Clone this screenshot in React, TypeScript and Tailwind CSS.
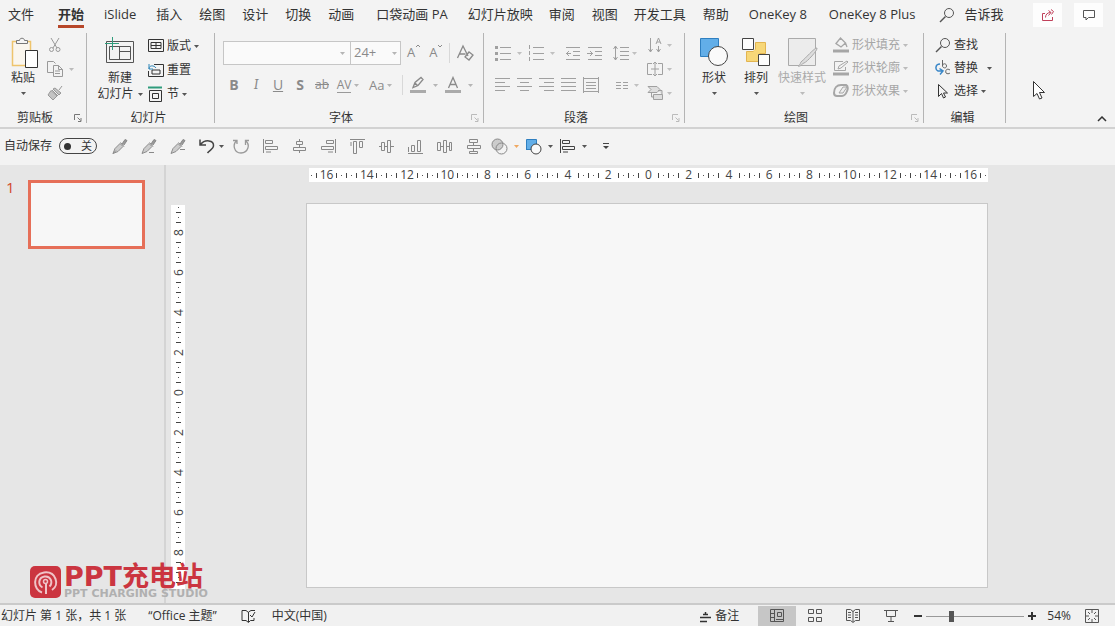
import type { ReactNode } from "react";

interface TabItem {
  label: string;
  gap: string;
  active?: boolean;
}

const tabs: TabItem[] = [
  { label: "文件", gap: "ml-2" },
  { label: "开始", gap: "ml-6", active: true },
  { label: "iSlide", gap: "ml-5" },
  { label: "插入", gap: "ml-5" },
  { label: "绘图", gap: "ml-[17px]" },
  { label: "设计", gap: "ml-[17px]" },
  { label: "切换", gap: "ml-[17px]" },
  { label: "动画", gap: "ml-[17px]" },
  { label: "口袋动画 PA", gap: "ml-[22px]" },
  { label: "幻灯片放映", gap: "ml-5" },
  { label: "审阅", gap: "ml-4" },
  { label: "视图", gap: "ml-[17px]" },
  { label: "开发工具", gap: "ml-4" },
  { label: "帮助", gap: "ml-[17px]" },
  { label: "OneKey 8", gap: "ml-5" },
  { label: "OneKey 8 Plus", gap: "ml-[22px]" },
];

interface IconProps {
  w?: number;
  h?: number;
  className?: string;
  children: ReactNode;
}

function Icon({ w = 16, h = 16, className = "", children }: IconProps) {
  return (
    <svg
      width={w}
      height={h}
      viewBox={`0 0 ${w} ${h}`}
      fill="none"
      stroke="currentColor"
      className={`shrink-0 ${className}`}
      aria-hidden="true"
    >
      {children}
    </svg>
  );
}

function Arrow({ className = "text-[#555]" }: { className?: string }) {
  return (
    <Icon w={5} h={3} className={className}>
      <path d="M0 0h5L2.500 3z" fill="currentColor" stroke="none" />
    </Icon>
  );
}

function Lines({ rows }: { rows: [number, number][] }) {
  return (
    <Icon>
      {rows.map(([x1, x2], i) => (
        <path key={i} d={`M${x1} ${1.5 + i * 4}H${x2}`} />
      ))}
    </Icon>
  );
}

function Magnifier() {
  return (
    <Icon className="text-[#555]">
      <circle cx="10" cy="6" r="4.500" />
      <path d="M6.500 9.500L1 15" strokeWidth="1.500" />
    </Icon>
  );
}

function ShapesIcon() {
  return (
    <Icon w={30} h={30}>
      <path d="M1.500 1.500h18v18h-18z" fill="#62aee8" stroke="#2f7fc0" />
      <circle cx="19" cy="19" r="9.500" fill="#fafafa" stroke="#444" />
    </Icon>
  );
}

interface GroupProps {
  title: string;
  width: string;
  launcher?: string;
  children: ReactNode;
}

function Group({ title, width, launcher, children }: GroupProps) {
  return (
    <section className={`${width} flex shrink-0`}>
      <div className="flex flex-1 flex-col">
        <div className="flex h-20">{children}</div>
        <div className="flex h-[18px] items-center">
          <h2 className="flex-1 pr-1 text-center">{title}</h2>
          {launcher && (
            <button aria-label={`${title}设置`} className={`mr-1 ${launcher}`}>
              <Icon w={8} h={8}>
                <path d="M.5 6V.5H6M3.500 3.500l3 3M7 4v3.500H4" />
              </Icon>
            </button>
          )}
        </div>
      </div>
      <div className="my-1 w-px bg-[#b4b4b4]" />
    </section>
  );
}

const alignIcons: { name: string; d: string }[] = [
  { name: "左对齐", d: "M1.500 1v14M3.500 2.500h7v3h-7zM3.500 8.500h12v3h-12zM4 14h5" },
  { name: "水平居中", d: "M5.500 3.500h6v3h-6zM2.500 9.500h12v3h-12zM8.500 1v2M8.500 7v2M8.500 13v2" },
  { name: "右对齐", d: "M15.500 1v14M6.500 2.500h7v3h-7zM1.500 8.500h12v3h-12zM8 14h5" },
  { name: "顶端对齐", d: "M1 1.500h15M4.500 3.500h3v12h-3zM10.500 3.500h3v6h-3zM2 4v4" },
  { name: "垂直居中", d: "M3.500 4.500h3v8h-3zM9.500 2.500h3v12h-3zM1 8.500h2M7 8.500h2M13 8.500h3" },
  { name: "底端对齐", d: "M1 15.500h15M4.500 7.500h3v6h-3zM10.500 2.500h3v11h-3zM1.500 9v5" },
  { name: "横向分布", d: "M1.500 4.500h3v8h-3zM7.500 2.500h3v12h-3zM13.500 4.500h2v8h-2zM5 8.500h2M11 8.500h2" },
  { name: "纵向分布", d: "M4.500 1.500h8v3h-8zM2.500 7.500h13v3h-13zM4.500 13.500h8v2h-8zM8.500 5v2M8.500 11v2" },
];

const hLabels = [16, 14, 12, 10, 8, 6, 4, 2, 0, 2, 4, 6, 8, 10, 12, 14, 16];
const vLabels = [8, 6, 4, 2, 0, 2, 4, 6, 8];

function HTick({ tall }: { tall?: boolean }) {
  return (
    <span className="flex w-[5px] items-center justify-center">
      <i className={tall ? "h-[5px] w-px bg-[#444]" : "h-px w-px bg-[#555]"} />
    </span>
  );
}

function VTick({ tall }: { tall?: boolean }) {
  return (
    <span className="flex h-[5px] items-center justify-center">
      <i className={tall ? "h-px w-[5px] bg-[#444]" : "h-px w-px bg-[#555]"} />
    </span>
  );
}

function HRuler() {
  return (
    <div className="ml-[3px] flex h-[14px] bg-white text-[12px] leading-[14px] text-[#444]">
      {hLabels.map((n, i) => (
        <div key={i} className="flex grow">
          {i > 0 && <HTick tall />}
          <HTick />
          <HTick tall />
          <span className="flex w-[15px] grow justify-center">{n}</span>
          <HTick tall />
          <HTick />
        </div>
      ))}
    </div>
  );
}

function VRuler() {
  return (
    <div className="mt-10 mb-[14px] ml-[5px] flex w-[14px] flex-col bg-white text-[12px] text-[#444]">
      <VTick />
      {vLabels.map((n, i) => (
        <div key={i} className="flex flex-col">
          <VTick tall />
          <VTick />
          <VTick tall />
          <span className="flex h-[15px] -rotate-90 items-center justify-center leading-[14px]">{n}</span>
          <VTick tall />
          <VTick />
        </div>
      ))}
      <VTick tall />
      <VTick />
      <VTick tall />
    </div>
  );
}

function TabBar() {
  return (
    <nav className="flex h-[29px] items-center text-[13px]">
      {tabs.map((tab) => (
        <button
          key={tab.label}
          className={`${tab.gap} h-[27px] border-b-3 pt-[3px] whitespace-nowrap ${
            tab.active ? "border-[#b7472a] font-bold" : "border-transparent"
          }`}
        >
          {tab.label}
        </button>
      ))}
      <button className="ml-6 flex items-center gap-[9px] whitespace-nowrap">
        <Magnifier />
        告诉我
      </button>
      <div className="mr-3 ml-auto flex gap-3">
        <button aria-label="共享" className="flex h-6 w-[29px] items-center justify-center bg-[#fdfdfd] text-[#c0405a]">
          <Icon w={14} h={14}>
            <path d="M4 5.500H1.500v7h10V9M4.500 9.500c0-3 2-5 5-5M7.500 2.500l2.500 2-2.500 3M10 1.500l2.500 2-2 3" />
          </Icon>
        </button>
        <button aria-label="批注" className="flex h-6 w-[29px] items-center justify-center bg-[#fdfdfd] text-[#555]">
          <Icon w={14} h={14}>
            <path d="M1.500 2.500h11v7h-6L4 12V9.500H1.500z" />
          </Icon>
        </button>
      </div>
    </nav>
  );
}

function ClipboardGroup() {
  return (
    <Group title="剪贴板" width="w-[87px]" launcher="text-[#777]">
      <button className="ml-2 flex w-[30px] flex-col items-center pt-2">
        <Icon w={30} h={32}>
          <path d="M4.500 4.500h18v24h-18z" fill="#faf6ee" stroke="#eec46c" strokeWidth="1.500" />
          <path d="M8.500 6.500v-3h3c0-3 5-3 5 0h3v3z" fill="#f5f5f5" stroke="#777" />
          <path d="M17.500 13.500h12v17h-12z" fill="#fff" stroke="#333" />
        </Icon>
        <span className="leading-[18px]">粘贴</span>
        <span className="flex h-3 items-center"><Arrow /></span>
      </button>
      <div className="ml-[9px] flex flex-col gap-2 pt-2 text-[#999]">
        <button aria-label="剪切">
          <Icon>
            <path d="M4 1l6 10M12 1L6 11" />
            <circle cx="4.500" cy="12.500" r="2" />
            <circle cx="11" cy="12.500" r="2" />
          </Icon>
        </button>
        <button aria-label="复制" className="flex items-center gap-[6px]">
          <Icon>
            <path d="M6 11.500H.500V.500h6l2 2M6.500 4.500h5l4 4v7h-9zM11.500 4.500v4h4M8 10h5M8 12.500h5" />
          </Icon>
          <Arrow className="text-[#bbb]" />
        </button>
        <button aria-label="格式刷">
          <Icon>
            <path d="M15 1l-3 4M5 5l6 6M6 4l6 6 2-2-6-5zM4 5.500L1 10l5 5 4-4z" fill="#c4c4c4" />
          </Icon>
        </button>
      </div>
    </Group>
  );
}

function SlidesGroup() {
  return (
    <Group title="幻灯片" width="w-[128px]">
      <button className="ml-[9px] flex w-[48px] flex-col items-center pt-[7px]">
        <Icon w={32} h={30}>
          <path d="M2.500 5.500h27v21h-27zM5.500 10.500h21v13h-21zM15.500 10.500v13M15.500 15.500h11" stroke="#555" />
          <path d="M8.500 1v13M1 7.500h14" stroke="#2f9c7c" />
        </Icon>
        <span className="mt-[3px] leading-[18px]">新建</span>
        <span className="flex items-center gap-1 leading-[14px] whitespace-nowrap">
          幻灯片 <Arrow />
        </span>
      </button>
      <div className="ml-1 flex flex-col gap-[6px] pt-2 leading-[18px]">
        <button className="flex items-center gap-[3px]">
          <Icon>
            <path d="M.5 1.500h15v12H.500zM3 4.500h10v6H3zM8 4.500v6M3 7.500h10" />
          </Icon>
          版式 <Arrow />
        </button>
        <button className="flex items-center gap-[3px]">
          <Icon>
            <path d="M6 2.500h9.500v12H.500V9M4 8h8v4H4z" />
            <path d="M1 7c0-4 5-4 7-1M1 2v5h4" stroke="#2f86b8" />
          </Icon>
          重置
        </button>
        <button className="flex items-center gap-[3px]">
          <Icon>
            <path d="M1.500 4.500h12v11h-12zM4.500 7.500h6v5h-6z" />
            <path d="M0 1.500h14" stroke="#2f9c7c" strokeWidth="2" />
          </Icon>
          节 <Arrow />
        </button>
      </div>
    </Group>
  );
}

function FontGroup() {
  return (
    <Group title="字体" width="w-[269px]" launcher="text-[#bbb]">
      <div className="ml-2 flex flex-col pt-3 text-[#8a8a8a]">
        <div className="flex h-6 items-center">
          <div className="relative flex h-6 w-32 items-center">
            <select aria-label="字体名称" className="h-full w-full appearance-none border border-[#c6c6c6] bg-[#fafafa] px-1">
              <option></option>
            </select>
            <Arrow className="absolute right-[6px] text-[#b5b5b5]" />
          </div>
          <div className="relative flex h-6 w-[50px] items-center">
            <select aria-label="字号" className="h-full w-full appearance-none border border-l-0 border-[#c6c6c6] bg-[#fafafa] px-[3px] text-[13px]">
              <option>24+</option>
            </select>
            <Arrow className="absolute right-1 text-[#b5b5b5]" />
          </div>
          <button aria-label="增大字号" className="ml-[6px] flex text-[13px]">
            A<Icon w={6} h={6}><path d="M1 4l2-2 2 2" /></Icon>
          </button>
          <button aria-label="减小字号" className="ml-2 flex text-[13px]">
            A<Icon w={6} h={6}><path d="M1 2l2 2 2-2" /></Icon>
          </button>
          <i className="ml-[6px] h-5 w-px bg-[#d8d8d8]" />
          <button aria-label="清除格式" className="ml-[6px]">
            <Icon w={18} h={18}>
              <path d="M1.500 14L7 2l5 10M3.500 10h6M9 13l4-5 4 3-4 5z" strokeWidth="1.300" />
            </Icon>
          </button>
        </div>
        <div className="mt-2 flex h-6 items-center text-[14px] leading-[20px]">
          <button className="w-[22px] font-bold">B</button>
          <button className="w-[22px] font-serif italic">I</button>
          <button className="w-[22px] underline">U</button>
          <button className="w-[22px] font-bold">S</button>
          <button className="w-[22px] text-[12px] line-through">ab</button>
          <button className="flex w-[30px] items-center justify-center gap-[3px] text-[12px]">
            <span className="border-b border-[#999] leading-[14px]">AV</span>
            <Arrow className="text-[#b5b5b5]" />
          </button>
          <button className="ml-[6px] flex items-center gap-[3px] text-[13px]">
            Aa <Arrow className="text-[#b5b5b5]" />
          </button>
          <i className="mr-[6px] ml-[10px] h-5 w-px bg-[#d8d8d8]" />
          <button aria-label="文本突出显示颜色" className="flex items-center gap-[6px]">
            <Icon w={18} h={18}>
              <path d="M4 11.500l2-5 6-5 2 2-5 6zM6 7l3 3" strokeWidth="1.300" />
              <path d="M1 15.500h16" strokeWidth="3" stroke="#aaa" />
            </Icon>
            <Arrow className="text-[#b5b5b5]" />
          </button>
          <button aria-label="字体颜色" className="ml-[6px] flex items-center gap-[6px]">
            <Icon w={18} h={18}>
              <path d="M4.500 12L9 1.500 13.500 12M6 8.500h6" strokeWidth="1.300" />
              <path d="M1 15.500h16" strokeWidth="3" stroke="#aaa" />
            </Icon>
            <Arrow className="text-[#b5b5b5]" />
          </button>
        </div>
      </div>
    </Group>
  );
}

function ParagraphGroup() {
  return (
    <Group title="段落" width="w-[201px]" launcher="text-[#bbb]">
      <div className="ml-[11px] flex w-[142px] flex-col pt-4 text-[#a0a0a0]">
        <div className="flex h-4 items-center">
          <button aria-label="项目符号" className="flex items-center gap-[6px]">
            <Icon>
              <path d="M5 2.500h11M5 8.500h11M5 14.500h11" />
              <path d="M0 2.500h3M0 8.500h3M0 14.500h3" strokeWidth="3" />
            </Icon>
            <Arrow className="text-[#c0c0c0]" />
          </button>
          <button aria-label="编号" className="ml-[6px] flex items-center gap-[6px]">
            <Icon>
              <path d="M5 2.500h11M5 8.500h11M5 14.500h11M1.500 0v4M1.500 6v4M1.500 12v4" />
            </Icon>
            <Arrow className="text-[#c0c0c0]" />
          </button>
          <button aria-label="减少缩进" className="ml-[10px]">
            <Icon>
              <path d="M1 2.500h14M8 6.500h7M8 10.500h7M1 14.500h14M6 8.500H1M4 6L1.500 8.500 4 11" />
            </Icon>
          </button>
          <button aria-label="增加缩进" className="ml-[6px]">
            <Icon>
              <path d="M1 2.500h14M8 6.500h7M8 10.500h7M1 14.500h14M0 8.500h6M3 6l2.500 2.500L3 11" />
            </Icon>
          </button>
          <button aria-label="行距" className="ml-[10px] flex items-center gap-[3px]">
            <Icon>
              <path d="M7 2.500h9M7 6.500h9M7 10.500h9M7 14.500h9M2.500 1v14M.5 4l2-3 2 3M.5 12l2 3 2-3" />
            </Icon>
            <Arrow className="text-[#c0c0c0]" />
          </button>
        </div>
        <div className="mt-4 flex h-4 items-center gap-[6px]">
          <button aria-label="文本左对齐"><Lines rows={[[0, 15], [0, 10], [0, 15], [0, 10]]} /></button>
          <button aria-label="居中"><Lines rows={[[0, 15], [3, 12], [0, 15], [3, 12]]} /></button>
          <button aria-label="文本右对齐"><Lines rows={[[0, 15], [5, 15], [0, 15], [5, 15]]} /></button>
          <button aria-label="两端对齐"><Lines rows={[[0, 15], [0, 15], [0, 15], [0, 15]]} /></button>
          <button aria-label="分散对齐">
            <Icon>
              <path d="M.5 0v16M15.500 0v16M0 1.500h16M3 5.500h10M3 8.500h10M3 11.500h10M0 14.500h16" />
            </Icon>
          </button>
          <button aria-label="分栏" className="ml-[10px] flex items-center gap-[3px]">
            <Icon>
              <path d="M1 5.500h5M8 5.500h5M1 8.500h5M8 8.500h5M1 11.500h5M8 11.500h5" />
            </Icon>
            <Arrow className="text-[#c0c0c0]" />
          </button>
        </div>
      </div>
      <div className="ml-[10px] flex flex-col gap-2 pt-2 text-[#a0a0a0]">
        <button aria-label="文字方向" className="flex items-center gap-1">
          <Icon>
            <path d="M3.500 1v14M1.500 12l2 3 2-3M9 7l2.500-6L14 7M10 5h3M11.500 9v6M9.500 12l2 3 2-3" />
          </Icon>
          <Arrow className="text-[#c0c0c0]" />
        </button>
        <button aria-label="对齐文本" className="flex items-center gap-1">
          <Icon>
            <path d="M5 2.500H.500v11H5M11 2.500h4.500v11H11M8 1v14M4 8h8M6 3l2-2 2 2M6 13l2 2 2-2" />
          </Icon>
          <Arrow className="text-[#c0c0c0]" />
        </button>
        <button aria-label="转换为 SmartArt" className="flex items-center gap-1">
          <Icon>
            <path d="M1 1.500h9l3 3-3 3H1l3-3zM6.500 9.500h9v5h-9zM4.500 8v4H6M11 5.500h4v4" fill="#dedede" />
          </Icon>
          <Arrow className="text-[#c0c0c0]" />
        </button>
      </div>
    </Group>
  );
}

function DrawingGroup() {
  return (
    <Group title="绘图" width="w-[239px]" launcher="text-[#bbb]">
      <button className="ml-[14px] flex w-[30px] flex-col items-center pt-2">
        <ShapesIcon />
        <span className="mt-[2px] leading-[18px]">形状</span>
        <span className="flex h-3 items-center"><Arrow /></span>
      </button>
      <button className="ml-3 flex w-[30px] flex-col items-center pt-2">
        <Icon w={30} h={30}>
          <path d="M14.500 5.500h10v11h-10zM5.500 14.500h12v10h-12z" fill="#f7d778" stroke="#e2b450" />
          <path d="M12.500 12.500h6v6h-6z" fill="#f7d778" stroke="none" />
          <path d="M1.500 1.500h11v11h-11zM17.500 17.500h11v11h-11z" fill="#fdfdfd" stroke="#444" />
        </Icon>
        <span className="mt-[2px] leading-[18px]">排列</span>
        <span className="flex h-3 items-center"><Arrow /></span>
      </button>
      <button className="ml-[6px] flex w-[50px] flex-col items-center pt-2 text-[#aaa]">
        <Icon w={32} h={30}>
          <path d="M2.500 1.500h27v27h-27z" fill="#ececec" stroke="#aaa" />
          <path d="M31 11c1 2-10 14-13 15s-3 4-6 3c3-1 2-4 4-5s13-14 15-13z" fill="#ddd" stroke="#aaa" />
        </Icon>
        <span className="mt-[2px] leading-[18px] whitespace-nowrap">快速样式</span>
        <span className="flex h-3 items-center"><Arrow className="text-[#bbb]" /></span>
      </button>
      <div className="ml-[6px] flex flex-col gap-[5px] pt-[7px] leading-[18px] text-[#a6a6a6]">
        <button className="flex items-center gap-[3px]">
          <Icon>
            <path d="M3 6.500L7.500 1l5 5-4.500 4zM12.500 6l1.500 4" strokeWidth="1.300" />
            <path d="M0 14h16" strokeWidth="3" />
          </Icon>
          形状填充 <Arrow className="text-[#bbb]" />
        </button>
        <button className="flex items-center gap-[3px]">
          <Icon>
            <path d="M10 1.500H1.500v9h11V7M5 9l1-3 8-5 1 1-7 6z" />
            <path d="M0 14h16" strokeWidth="3" />
          </Icon>
          形状轮廓 <Arrow className="text-[#bbb]" />
        </button>
        <button className="flex items-center gap-[3px]">
          <Icon>
            <path d="M1 10c0-5 3-8 7-8h5c4 2 0 11-4 11H4c-2 0-3-1-3-3z" strokeWidth="2" />
            <path d="M6 10l4-6h4l-4 6z" fill="#eee" />
          </Icon>
          形状效果 <Arrow className="text-[#bbb]" />
        </button>
      </div>
    </Group>
  );
}

function EditGroup() {
  return (
    <Group title="编辑" width="w-[82px]">
      <div className="ml-[11px] flex flex-col gap-[5px] pt-[7px] leading-[18px]">
        <button className="flex items-center gap-[3px]">
          <Magnifier />
          查找
        </button>
        <button className="flex items-center gap-[3px]">
          <Icon>
            <path d="M7.500 0v6c0-3 4-3 4 0s-4 2-4 0M15 10c-3-2-5 0-4 3 1 1 3 1 4 0" stroke="#666" />
            <path d="M5 4C0 4 0 10 3 11h4M4.500 8.500L8 11l-3 3.500" stroke="#3a87c8" strokeWidth="1.500" />
          </Icon>
          替换
          <span className="ml-[6px]"><Arrow /></span>
        </button>
        <button className="flex items-center gap-[3px]">
          <Icon>
            <path d="M3.500 1.500v12l3-3 2 4.500 2-1-2-4h4z" />
          </Icon>
          选择 <Arrow />
        </button>
      </div>
    </Group>
  );
}

function Pen({ tip }: { tip: string }) {
  return (
    <Icon>
      <path d="M1 15.500l2-5 5-5 3 3-5 5z" fill="#ccc" stroke="#8c8c8c" />
      <path d="M8.500 4.500l3.500 4M10 6l3-4.500 2 1-3 4.500" fill="#999" />
      <path d={tip} />
    </Icon>
  );
}

function QuickAccess() {
  return (
    <div className="flex h-[38px] items-center border-t-2 border-[#d2d2d2] bg-[#f3f3f3] pb-[2px] pl-1">
      <label className="flex items-center gap-[7px]">
        自动保存
        <span className="relative flex h-4 w-[38px] items-center rounded-full border border-[#444]">
          <input type="checkbox" className="absolute inset-0 h-full w-full cursor-pointer appearance-none" />
          <i className="ml-1 h-[7px] w-[7px] rounded-full bg-[#333]" />
          <span className="ml-auto pr-1 text-[11px] leading-[14px]">关</span>
        </span>
      </label>
      <div className="ml-[15px] flex items-center gap-[13px] text-[#888]">
        <button aria-label="取色器"><Pen tip="M1 15.500l3-3" /></button>
        <button aria-label="填充取色"><Pen tip="M8 14.500h5" /></button>
        <button aria-label="线条取色"><Pen tip="M10 11.500h5" /></button>
        <button aria-label="撤消" className="flex items-center gap-1 text-[#444]">
          <Icon>
            <path d="M1 1.500V7h6M1.500 6.500C6 1 15 2 14.500 8c0 3-4 4-6 7" strokeWidth="1.500" />
          </Icon>
          <Arrow />
        </button>
        <button aria-label="恢复" className="-ml-1 text-[#999]">
          <Icon>
            <path d="M4 2.500C-1 6 1 15 8 15s10-9 4-12.500M12.500 7V2.500H16M0 2.500h4V6" strokeWidth="1.300" />
          </Icon>
        </button>
        {alignIcons.map((icon) => (
          <button key={icon.name} aria-label={icon.name}>
            <Icon><path d={icon.d} /></Icon>
          </button>
        ))}
      </div>
      <div className="ml-[10px] flex items-center gap-[6px] text-[#444]">
        <button aria-label="合并形状" className="flex items-center gap-[6px]">
          <Icon w={17} h={17}>
            <circle cx="6.500" cy="6.500" r="5.500" fill="#ccc" stroke="#888" />
            <circle cx="10.500" cy="10.500" r="5.500" stroke="#888" />
          </Icon>
          <Arrow className="text-[#f0a860]" />
        </button>
        <button aria-label="形状" className="flex items-center gap-[6px]">
          <Icon w={17} h={17}>
            <path d="M1.500 12V1.500h10v10h-10z" fill="#62aee8" stroke="#2f7fc0" />
            <circle cx="11" cy="11" r="5" fill="#fafafa" stroke="#444" />
          </Icon>
          <Arrow />
        </button>
        <button aria-label="对齐" className="flex items-center gap-[6px]">
          <Icon w={17}><path d={alignIcons[0].d} /></Icon>
          <Arrow />
        </button>
        <button aria-label="自定义快速访问工具栏" className="ml-[10px]">
          <Icon w={6} h={7}><path d="M0 .5h6" /><path d="M0 3h6L3 6z" fill="currentColor" stroke="none" /></Icon>
        </button>
      </div>
    </div>
  );
}

function Brand() {
  return (
    <div className="absolute bottom-1 left-[30px] flex items-center gap-[3px]">
      <Icon w={31} h={32}>
        <rect width="31" height="32" rx="5" fill="#cb3540" stroke="none" />
        <path d="M12 26.500C3 24 2 8 14 6.500S30 19 22 24" stroke="#f0c4c8" strokeWidth="2" />
        <path d="M12.500 21.500c-5-3-4-10 2-11s9 6 5 10M16 28V17" stroke="#f0c4c8" strokeWidth="2" />
        <circle cx="15.500" cy="15.500" r="2" stroke="#f0c4c8" strokeWidth="1.500" />
      </Icon>
      <div className="whitespace-nowrap">
        <div className="font-['DejaVu_Sans','Noto_Sans_CJK_SC',sans-serif] text-[27px] leading-[24px] font-bold text-[#cb3540]">
          PPT充电站
        </div>
        <div className="font-['DejaVu_Sans',sans-serif] text-[11px] leading-[10px] font-bold text-[#b0b0b0]">
          PPT CHARGING STUDIO
        </div>
      </div>
    </div>
  );
}

function Workspace() {
  return (
    <main className="relative flex min-h-0 flex-1 bg-[#e6e6e6]">
      <aside className="flex w-[166px] shrink-0 items-start border-r-2 border-[#d4d4d4] pt-[15px] pl-[6px]">
        <span className="w-[22px] text-[15px] leading-[14px] text-[#d2492a]">1</span>
        <button aria-label="幻灯片 1" className="aspect-[117/69] w-[117px] border-3 border-[#e66f58] bg-[#f7f7f7]" />
      </aside>
      <VRuler />
      <div className="mr-[127px] ml-[121px] flex-1 pt-[3px]">
        <HRuler />
        <div className="mt-[21px] aspect-[682/385] border border-[#c8c8c8] bg-[#f7f7f7]" />
      </div>
      <Brand />
    </main>
  );
}

function StatusBar() {
  return (
    <footer className="flex h-[23px] items-center border-t-2 border-[#cacaca] bg-[#f1f1f1] pt-px pl-[1px] whitespace-nowrap">
      <span>幻灯片 第 1 张，共 1 张</span>
      <span className="ml-[22px]">“Office 主题”</span>
      <button aria-label="拼写检查" className="ml-6">
        <Icon w={15} h={14}>
          <path d="M7.500 3.500L5 1.500H1v10h4l2.500 2 2-2H13V9M7.500 3v10M7.500 3L10 1.500h4M9 6l2 2 3-5" />
        </Icon>
      </button>
      <button className="ml-4">中文(中国)</button>
      <button className="ml-auto flex items-center gap-[3px]">
        <Icon w={13} h={13}><path d="M4 4.500h5M6.500 2v2M1 7.500h11M1 11.500h7" strokeWidth="1.500" /></Icon>
        备注
      </button>
      <div className="ml-[19px] flex h-full text-[#555]">
        <button aria-label="普通视图" className="flex w-[38px] items-center justify-center bg-[#c6c6c6]">
          <Icon><path d="M1.500 1.500h13v12h-13zM5.500 2v11M8.500 4.500h4v4h-4zM2 5.500h3M2 9.500h3M7 11.500h7" /></Icon>
        </button>
        <button aria-label="幻灯片浏览" className="flex w-[38px] items-center justify-center">
          <Icon><path d="M1.500 1.500h5v4h-5zM9.500 1.500h5v4h-5zM1.500 9.500h5v4h-5zM9.500 9.500h5v4h-5z" /></Icon>
        </button>
        <button aria-label="阅读视图" className="flex w-[38px] items-center justify-center">
          <Icon><path d="M8 3.500L5.500 1.500h-4v11h4l2.500 2 2.500-2h4v-11h-4zM8 3v11M3 4.500h3M3 7h3M3 9.500h3M10 4.500h3M10 7h3M10 9.500h3" /></Icon>
        </button>
        <button aria-label="幻灯片放映" className="flex w-[38px] items-center justify-center">
          <Icon><path d="M1 2.500h14M3.500 3v5.500h9V3M8 9v4M5 13.500h6" /></Icon>
        </button>
      </div>
      <button aria-label="缩小" className="ml-1">
        <Icon w={8} h={8}><path d="M0 4h8" strokeWidth="2" /></Icon>
      </button>
      <input
        type="range"
        aria-label="显示比例"
        min={10}
        max={190}
        defaultValue={54}
        className="ml-1 h-3 w-[98px] appearance-none bg-[linear-gradient(#999,#999)] bg-[length:100%_1px] bg-center bg-no-repeat [&::-webkit-slider-thumb]:h-[11px] [&::-webkit-slider-thumb]:w-[5px] [&::-webkit-slider-thumb]:appearance-none [&::-webkit-slider-thumb]:bg-[#555]"
      />
      <button aria-label="放大" className="ml-1">
        <Icon w={8} h={8}><path d="M0 4h8M4 0v8" strokeWidth="2" /></Icon>
      </button>
      <button className="ml-[11px]">54%</button>
      <button aria-label="适应窗口" className="mr-4 ml-[14px] text-[#555]">
        <Icon w={14} h={14}><path d="M.5.5h13v13H.500zM7 1v3M7 10v3M1 7h3M10 7h3M3 3l2 2M11 3L9 5M3 11l2-2M11 11L9 9" /></Icon>
      </button>
    </footer>
  );
}

export default function App() {
  return (
    <div className="relative flex h-screen flex-col overflow-hidden bg-[#f3f3f3] font-['Open_Sans','Noto_Sans_CJK_SC',sans-serif] text-[12px] text-[#333]">
      <TabBar />
      <div className="flex h-[98px]">
        <ClipboardGroup />
        <SlidesGroup />
        <FontGroup />
        <ParagraphGroup />
        <DrawingGroup />
        <EditGroup />
        <button aria-label="折叠功能区" className="mt-auto mr-2 mb-[5px] ml-auto">
          <Icon w={10} h={6}><path d="M1 5l4-4 4 4" strokeWidth="1.500" /></Icon>
        </button>
      </div>
      <QuickAccess />
      <Workspace />
      <StatusBar />
      {/* 鼠标指针 */}
      <Icon w={14} h={20} className="pointer-events-none absolute top-[80px] left-[1032px] text-[#333]">
        <path d="M1.500 1.500v15l3.500-3 2.500 5.500 2.500-1-2.500-5.500h5z" fill="#fff" />
      </Icon>
    </div>
  );
}
